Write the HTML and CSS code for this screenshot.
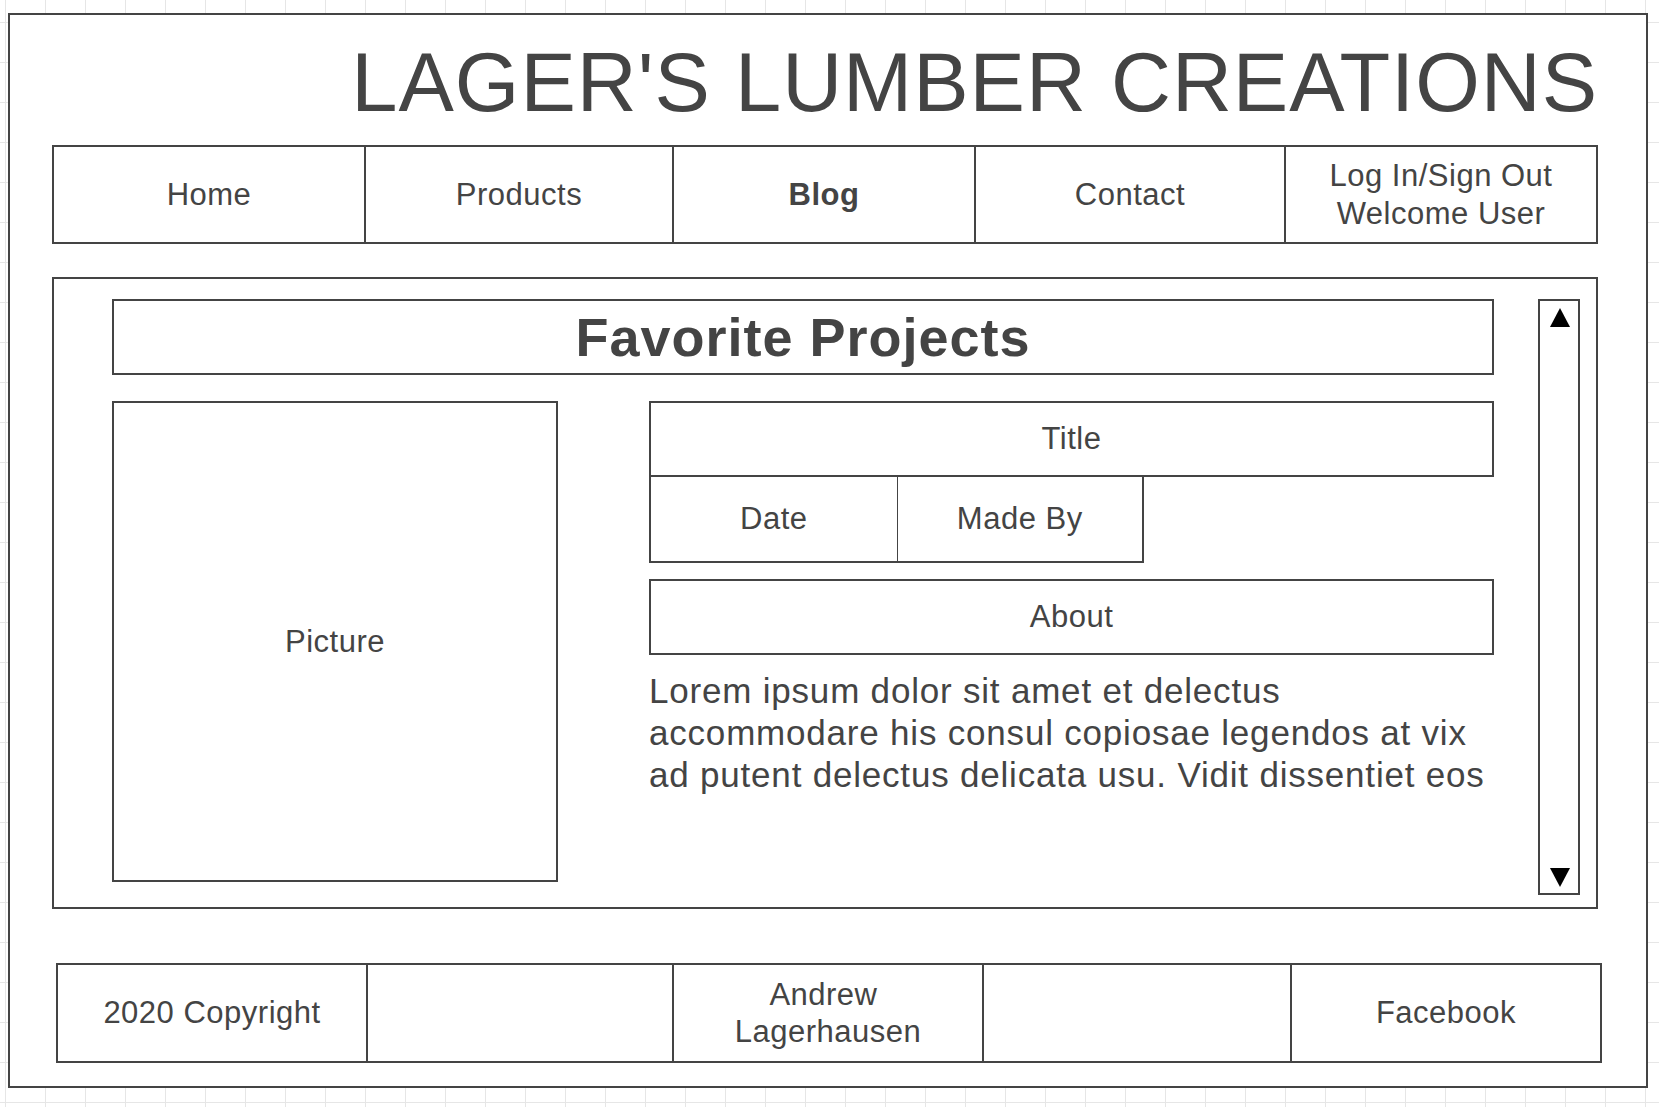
FILE: index.html
```html
<!DOCTYPE html>
<html>
<head>
  <title>Lager's Lumber Creations - Blog</title>
  <link rel="stylesheet" href="styles.css">
</head>
<body>
  <div class="frame">
    <h1 class="site-title">LAGER'S LUMBER CREATIONS</h1>

    <div class="nav">
      <div class="cell">Home</div>
      <div class="cell">Products</div>
      <div class="cell current">Blog</div>
      <div class="cell">Contact</div>
      <div class="cell">Log In/Sign Out<br>Welcome User</div>
    </div>

    <div class="content">
      <div class="posts">
        <div class="box heading">Favorite Projects</div>
        <div class="post">
          <div class="box picture">Picture</div>
          <div class="details">
            <div class="box field">Title</div>
            <div class="meta">
              <div class="meta-cell">Date</div>
              <div class="meta-cell">Made By</div>
            </div>
            <div class="box field about">About</div>
            <p class="lorem">Lorem ipsum dolor sit amet et delectus accommodare his consul copiosae legendos at vix ad putent delectus delicata usu. Vidit dissentiet eos</p>
          </div>
        </div>
      </div>
      <div class="scroll">
        <span class="arrow up"></span>
        <span class="arrow down"></span>
      </div>
    </div>

    <div class="footer">
      <div class="cell">2020 Copyright</div>
      <div class="cell"></div>
      <div class="cell">Andrew&nbsp;<br>Lagerhausen</div>
      <div class="cell"></div>
      <div class="cell">Facebook</div>
    </div>
  </div>
</body>
</html>
```

FILE: styles.css
```css
html, body {
  margin: 0;
}
body {
  padding: 13px 0 0 8px;
  background-color: #fff;
  background-image: linear-gradient(to right, #e6e6e6 1px, transparent 1px),
                    linear-gradient(to bottom, #e6e6e6 1px, transparent 1px);
  background-size: 40px 40px;
  background-position: 5px 22px;
  font-family: "Liberation Sans", Arial, sans-serif;
  color: #444;
  letter-spacing: 0.5px;
}

.frame {
  width: 1640px;
  height: 1075px;
  box-sizing: border-box;
  border: 2px solid #444;
  background: #fff;
  padding: 0 48px 0 42px;
}

.site-title {
  margin: 0;
  padding-top: 27px;
  font-size: 83px;
  font-weight: normal;
  line-height: 82px;
  letter-spacing: 1px;
  text-align: right;
}

/* top menu and footer share the same cell look */
.nav, .footer {
  display: grid;
  box-sizing: border-box;
  border: 2px solid #444;
}
.nav {
  margin-top: 21px;
  height: 99px;
  grid-template-columns: 310px 308px 302px 310px 312px;
}
.footer {
  margin: 54px -4px 0 4px;
  height: 100px;
  grid-template-columns: 308px 306px 310px 308px 310px;
}
.cell {
  display: flex;
  align-items: center;
  justify-content: center;
  text-align: center;
  font-size: 31px;
  line-height: 1.2;
  border-left: 2px solid #444;
}
.cell:first-child {
  border-left: 0;
}
.current {
  font-weight: bold;
}

.content {
  display: flex;
  align-items: flex-start;
  gap: 44px;
  margin-top: 33px;
  height: 632px;
  box-sizing: border-box;
  border: 2px solid #444;
  padding: 20px 16px 12px 58px;
}
.posts {
  width: 1382px;
}
.box {
  display: flex;
  align-items: center;
  justify-content: center;
  box-sizing: border-box;
  border: 2px solid #444;
  font-size: 31px;
}
.heading {
  height: 76px;
  font-size: 54px;
  font-weight: bold;
  letter-spacing: 1px;
}
.post {
  display: flex;
  gap: 91px;
  margin-top: 26px;
}
.picture {
  width: 446px;
  height: 481px;
}
.details {
  width: 845px;
}
.field {
  height: 76px;
}
.meta {
  display: flex;
  width: 495px;
  height: 88px;
  margin-top: -2px;
  box-sizing: border-box;
  border: 2px solid #444;
}
.meta-cell {
  display: flex;
  align-items: center;
  justify-content: center;
  width: 246px;
  font-size: 31px;
}
.meta-cell + .meta-cell {
  width: 245px;
  border-left: 1px solid #444;
}
.about {
  margin-top: 16px;
}
.lorem {
  margin: 15px 0 0;
  font-size: 35px;
  line-height: 42px;
  letter-spacing: 0.8px;
}

.scroll {
  display: flex;
  flex-direction: column;
  justify-content: space-between;
  align-items: center;
  width: 42px;
  height: 596px;
  box-sizing: border-box;
  border: 2px solid #444;
  padding: 7px 0 6px;
}
.arrow {
  width: 0;
  height: 0;
  margin-left: 2px;
  border-left: 10px solid transparent;
  border-right: 10px solid transparent;
}
.up {
  border-bottom: 19px solid #000;
}
.down {
  border-top: 19px solid #000;
}
```
